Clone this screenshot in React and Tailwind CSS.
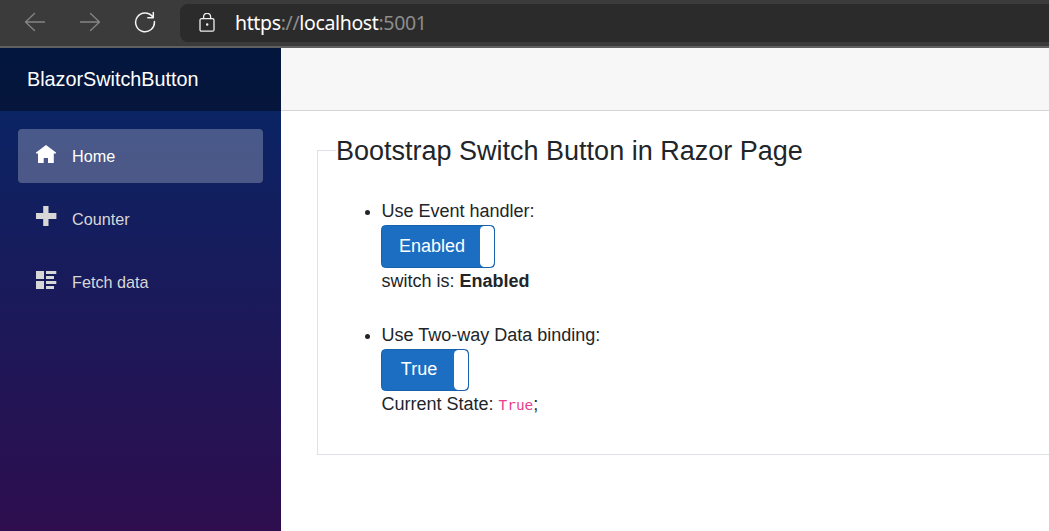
import React from "react";

const stroke = { fill: "none", strokeWidth: 1.3, strokeLinecap: "round", strokeLinejoin: "round" };

function BrowserBar() {
  return (
    <header className="flex h-12 shrink-0 border-b-2 border-[#606060] bg-[#3b3b3b]">
      <div className="flex w-[180px] shrink-0 items-start pt-[11px] pl-6">
        <svg className="h-[22px] w-[22px]" viewBox="0 0 22 22" stroke="#858585" {...stroke}>
          <path d="M20.5 11H1.5M10.5 2.5L1.5 11l9 8.5" />
        </svg>
        <svg className="ml-[33px] h-[22px] w-[22px]" viewBox="0 0 22 22" stroke="#858585" {...stroke}>
          <path d="M1.5 11h19M11.5 2.5l9 8.5-9 8.5" />
        </svg>
        <svg className="ml-[33px] h-[22px] w-[22px]" viewBox="0 0 22 22" stroke="#f4f4f4" {...stroke} strokeWidth="1.5">
          <path d="M18.6 5.8A9.4 9.4 0 1 0 20.4 10.5M19.3 1.5v5.3h-5.5" />
        </svg>
      </div>
      <div className="mt-1 flex h-[38px] grow items-center rounded-l-lg bg-[#2b2b2b] pl-[19px]">
        <svg className="h-5 w-4" viewBox="0 0 16 20" stroke="#f0f0f0" {...stroke}>
          <rect x="1" y="5.7" width="14" height="12.5" rx="1.5" />
          <path d="M4.6 5.5V3.8a3.5 3.5 0 0 1 7 0v1.7" />
          <circle cx="8.2" cy="11.6" r="0.6" fill="#f0f0f0" />
        </svg>
        <span className="ml-5 text-[19.5px] leading-[38px] tracking-[-0.36px] text-[#8d8d8d] font-['Noto_Sans',sans-serif]">
          <span className="text-white">https</span>://<span className="text-white">localhost</span>:5001
        </span>
      </div>
    </header>
  );
}

function NavItem({ label, active, children }) {
  return (
    <a
      className={
        active
          ? "flex h-[54px] items-center rounded bg-white/25 pl-[17px] text-white"
          : "flex h-[54px] items-center pl-[17px] text-[#d7d7d7]"
      }
    >
      <svg className="mr-4 -mt-1 h-[21px] w-[21px] overflow-visible" viewBox="0 0 21 21" fill="currentColor">
        {children}
      </svg>
      {label}
    </a>
  );
}

function Sidebar() {
  return (
    <aside className="w-[281px] shrink-0 bg-[linear-gradient(180deg,rgb(5,39,103)_0px,#3a0647_627px)]">
      <div className="flex h-[63px] items-center bg-black/40 pl-[27px] text-[19.8px] text-white">
        BlazorSwitchButton
      </div>
      <nav className="flex flex-col gap-[9px] px-[18px] pt-[18px] text-[16.2px]">
        <NavItem label="Home" active>
          <path d="M11 1L1 8.6V9.5H3V19h5.7v-5h4.3V19h5.8V9.5H21V8.6z" />
        </NavItem>
        <NavItem label="Counter">
          <path d="M8.2 -1h5.3v7H21.4v6H13.5v7H8.2v-7H1V6h7.2z" />
        </NavItem>
        <NavItem label="Fetch data">
          <path d="M1 1h8v8H1zM1 11h8v8H1zM11 1h10.3v3H11zM11 6h8v3h-8zM11 11h10.3v3H11zM11 16h8v3h-8z" />
        </NavItem>
      </nav>
    </aside>
  );
}

function Switch({ label, wide }) {
  return (
    <button
      className={
        wide
          ? "-ml-[0.5px] flex h-[43px] w-[114px] overflow-hidden rounded-[4.5px] border border-[#1861ac] bg-[#1b6ec2] text-white"
          : "-ml-[0.5px] flex h-[42px] w-[88px] overflow-hidden rounded-[4.5px] border border-[#1861ac] bg-[#1b6ec2] text-white"
      }
    >
      <span className={wide ? "w-[98px] pl-[2px] leading-10" : "w-[72px] pl-[2px] leading-[38px]"}>{label}</span>
      <span className="h-full w-[14px] rounded-[4.5px] bg-white" />
    </button>
  );
}

export default function App() {
  return (
    <div className="flex h-[531px] flex-col overflow-hidden bg-white text-[#212529] font-['Liberation_Sans',Arial,sans-serif]">
      <BrowserBar />
      <div className="flex min-h-0 grow">
        <Sidebar />
        <main className="min-w-0 grow">
          <div className="h-[63px] border-b border-[#d6d5d5] bg-[#f7f7f7]" />
          <div className="pt-[23px] pl-9">
            <fieldset className="h-[321px] border border-r-0 border-[#dee2e6] pl-[18px] text-[18px] leading-[27px]">
              <legend className="w-full pt-px text-[27px] leading-[32px]">Bootstrap Switch Button in Razor Page</legend>
              <ul className="list-disc pt-[31px] pl-[45.5px]">
                <li>
                  Use Event handler:
                  <Switch label="Enabled" wide />
                  switch is: <b>Enabled</b>
                </li>
                <li className="mt-[27px]">
                  Use Two-way Data binding:
                  <Switch label="True" />
                  Current State:{" "}
                  <code className="text-[14.4px] text-[#e83e8c] font-['DejaVu_Sans_Mono',monospace]">True</code>;
                </li>
              </ul>
            </fieldset>
          </div>
        </main>
      </div>
    </div>
  );
}
